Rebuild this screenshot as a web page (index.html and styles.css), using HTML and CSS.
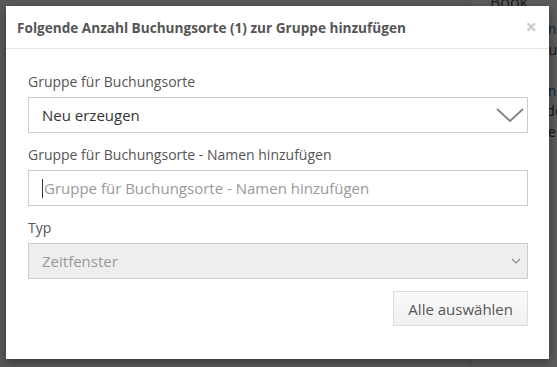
FILE: index.html
```html
<!DOCTYPE html>
<html lang="de">
<head>
    <meta charset="UTF-8">
    <title>Buchungsorte gruppieren</title>
    <link rel="stylesheet" href="styles.css">
</head>
<body>
    <div class="page">
        <div class="page-main"></div>
        <aside class="page-side">
            <div class="side-head">Book</div>
            <ul class="side-list">
                <li class="link">Termin</li>
                <li>Ausdruck</li>
                <li>Plätze</li>
                <li class="link">Termin</li>
                <li>Kalender</li>
                <li>Räume</li>
                <li>Platz</li>
            </ul>
        </aside>
    </div>

    <div class="backdrop"></div>

    <div class="modal">
        <div class="modal-header">
            <h4>Folgende Anzahl Buchungsorte (1) zur Gruppe hinzufügen</h4>
            <span class="close">&times;</span>
        </div>
        <div class="modal-body">
            <label class="field-label">Gruppe für Buchungsorte</label>
            <div class="select-big">
                <span>Neu erzeugen</span>
                <svg width="28" height="16" viewBox="0 0 28 16"><path d="M1 2 L14 14 L27 2" fill="none" stroke="#808080" stroke-width="1.8"/></svg>
            </div>

            <label class="field-label">Gruppe für Buchungsorte - Namen hinzufügen</label>
            <div class="text-input">
                <span class="caret"></span>
                <span class="placeholder">Gruppe für Buchungsorte - Namen hinzufügen</span>
            </div>

            <label class="field-label">Typ</label>
            <div class="select-disabled">
                <span>Zeitfenster</span>
                <svg width="10" height="6" viewBox="0 0 10 6"><path d="M1 1 L5 5 L9 1" fill="none" stroke="#888" stroke-width="1.2"/></svg>
            </div>

            <div class="actions">
                <button class="btn">Alle auswählen</button>
            </div>
        </div>
    </div>
</body>
</html>
```

FILE: styles.css
```css
* {
    box-sizing: border-box;
    margin: 0;
    padding: 0;
}

body {
    width: 557px;
    height: 367px;
    overflow: hidden;
    position: relative;
    font-family: 'Open Sans', 'Noto Sans', sans-serif;
    background: #fff;
    color: #555;
}

/* page behind the dialog */
.page {
    display: flex;
    height: 100%;
}

.page-main {
    width: 470px;
    flex-shrink: 0;
    background: #f6f6f6;
}

.page-side {
    flex: 1;
    min-width: 0;
    border-left: 1px solid #ddd;
    padding-left: 19px;
    font-size: 14px;
    color: #333;
    white-space: nowrap;
}

.side-head {
    margin-top: -9px;
    font-size: 16px;
    color: #555;
}

.side-list {
    list-style: none;
    margin-left: 20px;
    margin-top: 6px;
}

.side-list li {
    line-height: 20.5px;
}

.side-list .link {
    color: #2a6496;
}

.backdrop {
    position: absolute;
    inset: 0;
    background: rgba(0, 0, 0, 0.64);
}

/* dialog */
.modal {
    position: absolute;
    left: 6px;
    top: 6px;
    width: 543px;
    height: 353px;
    background: #fff;
    box-shadow: 0 3px 9px rgba(0, 0, 0, 0.4);
}

.modal-header {
    height: 43px;
    border-bottom: 1px solid #e5e5e5;
    display: flex;
    align-items: center;
    justify-content: space-between;
    padding: 0 12px 0 11px;
}

.modal-header h4 {
    font-size: 13.6px;
    font-weight: 700;
    color: #555;
    padding-top: 1px;
}

.close {
    font-size: 20px;
    font-weight: 700;
    color: #ccc;
    line-height: 1;
    margin-top: -1px;
}

.modal-body {
    padding: 23px 21px 0 22px;
}

.field-label {
    display: block;
    font-size: 14px;
    line-height: 20px;
    color: #555;
    margin-bottom: 5px;
}

.select-big,
.text-input,
.select-disabled {
    height: 36px;
    border: 1px solid #ccc;
    display: flex;
    align-items: center;
    padding: 0 13px;
    font-size: 15px;
    margin-bottom: 12px;
}

.select-big {
    justify-content: space-between;
    color: #333;
    padding-right: 3px;
}

.text-input {
    color: #999;
}

.caret {
    width: 1px;
    height: 19px;
    background: #333;
    margin-right: 1px;
}

.select-disabled {
    justify-content: space-between;
    background: #eee;
    color: #999;
    padding-right: 6px;
    margin-top: 2px;
    margin-bottom: 12px;
}

.actions {
    display: flex;
    justify-content: flex-end;
}

.btn {
    font-family: inherit;
    font-size: 15px;
    color: #555;
    height: 35px;
    padding: 0 14px;
    background: linear-gradient(#fafafa, #f0f0f0);
    border: 1px solid #ddd;
}
```
